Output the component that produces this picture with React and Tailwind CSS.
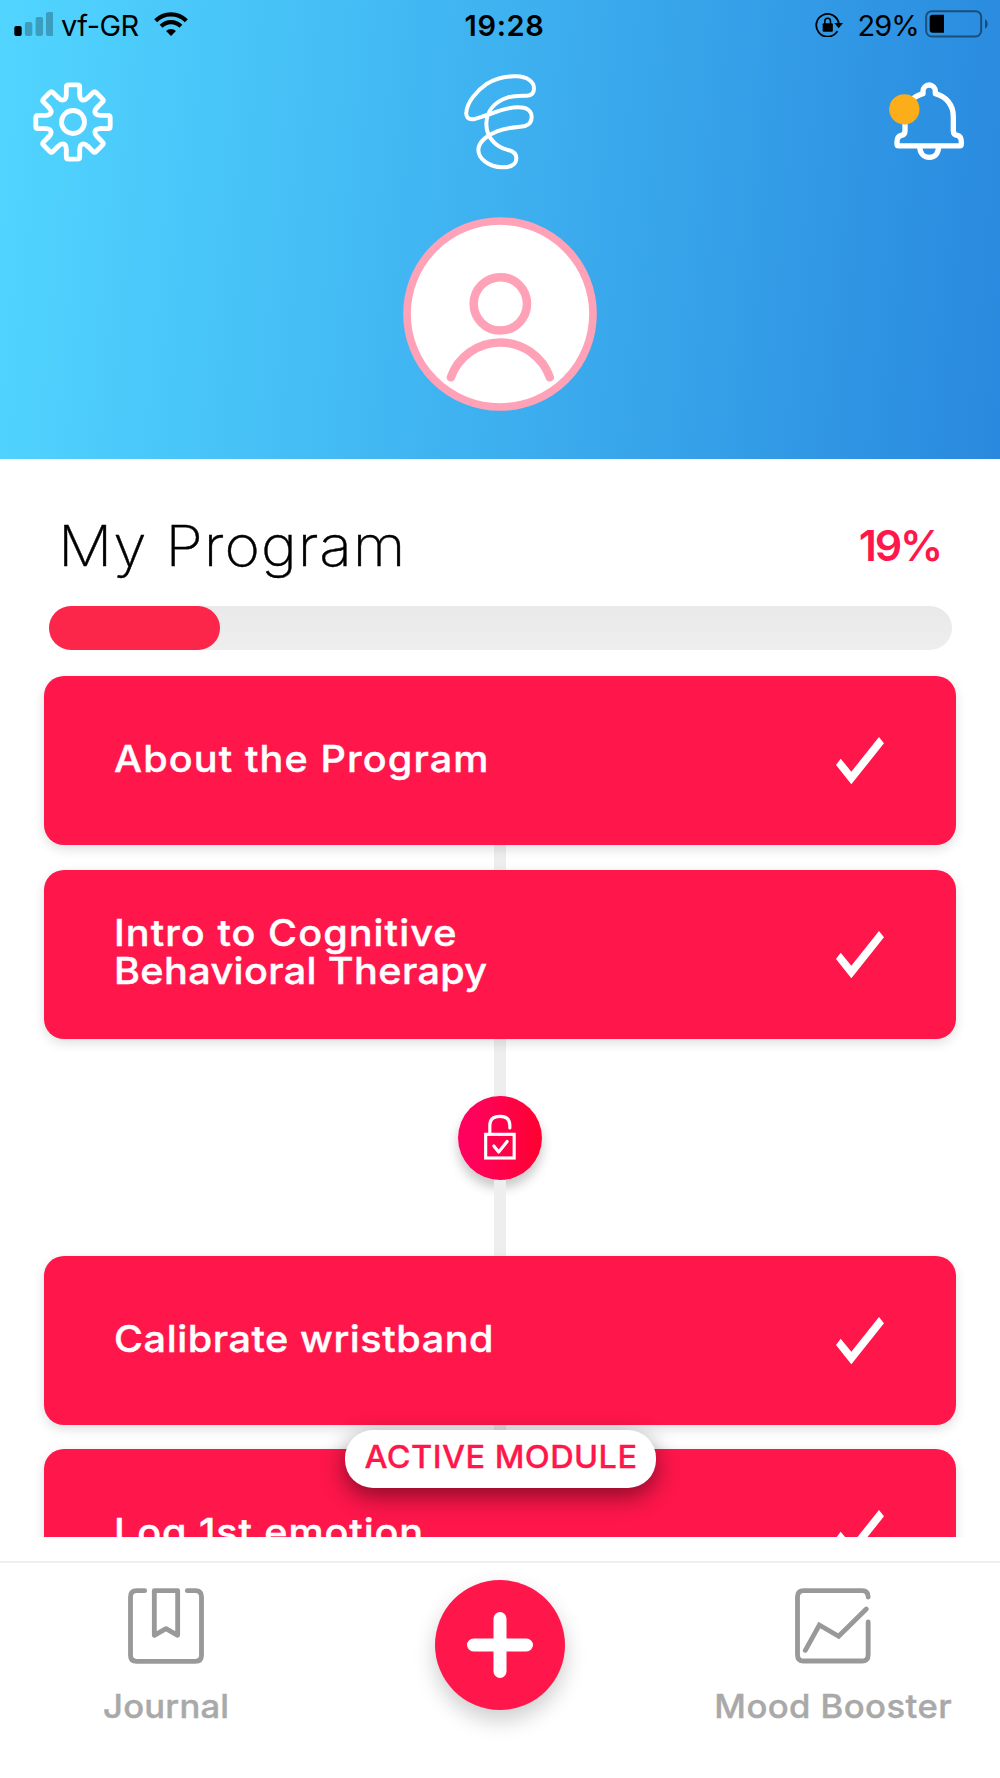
import React from "react";

function SignalBars() {
  return (
    <svg className="h-6 w-[39px]" viewBox="0 0 39 24">
      <rect x="0.3" y="14" width="7.4" height="10" rx="2" fill="#000" />
      <g fill="#000" fillOpacity="0.25">
        <rect x="10.9" y="10" width="7.4" height="14" rx="2" />
        <rect x="21.6" y="5" width="7.4" height="19" rx="2" />
        <rect x="32" y="0" width="7.4" height="24" rx="2" />
      </g>
    </svg>
  );
}

function WifiIcon() {
  return (
    <svg className="h-6 w-[34px]" viewBox="464 36 102 73">
      <g fill="none" stroke="#000" strokeWidth="12.5">
        <path d="M468.3 62.7A65.5 65.5 0 0 1 561.7 62.7" />
        <path d="M485 79.5A42 42 0 0 1 545 79.5" />
      </g>
      <path d="M500 94A21 21 0 0 1 530 94L515 109Z" fill="#000" />
    </svg>
  );
}

function RotationLockIcon() {
  return (
    <svg className="h-[25px] w-[28px]" viewBox="105 35 84 75">
      <path d="M171 94A34 34 0 1 1 176.500 70" fill="none" stroke="#000" strokeWidth="5.5" strokeLinecap="round" />
      <path d="M163 68H189L176 84Z" />
      <rect x="128" y="69" width="30.500" height="25" rx="3" />
      <path d="M134.500 71V62.500a8.500 9 0 0 1 17 0V71" fill="none" stroke="#000" strokeWidth="4.500" />
    </svg>
  );
}

function BatteryIcon() {
  return (
    <svg className="h-[28px] w-[64px]" viewBox="435 31 192 84">
      <rect x="438.500" y="34.500" width="165" height="76" rx="17" fill="none" stroke="#000" strokeOpacity="0.45" strokeWidth="6" />
      <path d="M458 45H492V99H458Q449 99 449 90V54Q449 45 458 45Z" />
      <path d="M615 58Q623.500 63 623.500 72.500T615 87Z" fillOpacity="0.45" />
    </svg>
  );
}

const teeth = [0, 45, 90, 135, 180, 225, 270, 315];

function GearIcon() {
  return (
    <svg className="h-20 w-20" viewBox="-40 -40 80 80" fill="none" stroke="#fff" strokeWidth="4.8" strokeLinecap="round">
      {teeth.map((angle) => (
        <path
          key={angle}
          transform={`rotate(${angle})`}
          d="M-15 -24.500C-10.400 -19.900 -6.700 -21.500 -6.700 -28V-35Q-6.700 -37.200 -4.500 -37.200H4.500Q6.700 -37.200 6.700 -35V-28"
        />
      ))}
      <circle r="11.500" />
    </svg>
  );
}

function ScribbleLogo() {
  return (
    <svg className="h-[100px] w-[75px]" viewBox="190 215 225 300" fill="none" stroke="#fff" strokeWidth="12">
      <path d="M272 341C250 347 236 355 220 357C206 358 198 349 200 335C203 305 230 272 262 250C290 233 322 227 350 228C382 229 403 243 403 264C403 278 396 286 382 286C355 286 345 285 325 291C285 304 260 332 260 372C261 415 292 440 322 448C342 452 350 462 350 474C350 490 340 501 308 501C266 500 236 474 236 448C237 422 268 402 292 393C325 380 355 381 376 377C389 373 396 362 396 350C396 333 384 321 358 321C325 320 298 331 272 341Z" />
    </svg>
  );
}

function BellIcon() {
  return (
    <svg className="h-[83.300px] w-20" viewBox="320 240 240 250">
      <g fill="none" stroke="#fff" strokeWidth="16" strokeLinejoin="round">
        <path d="M355 437.500Q350 437.500 350 432V425Q350 409 363 406Q374 404 374 392V350C374 315 396 289 428 281V273.500a18.500 18.500 0 0 1 37 0V281C497 289 519 315 519 350V392Q519 404 531 406Q543 409 543 425V432Q543 437.500 538 437.500Z" />
        <path d="M418.500 440C418.500 460 430 472 447 472S474.500 460 474.500 440" />
      </g>
      <circle cx="372" cy="328" r="45.500" fill="#fcae1a" />
    </svg>
  );
}

function Avatar() {
  return (
    <svg className="h-[194px] w-[194px]" viewBox="39 51 582 582" fill="none" stroke="#ffa1b7" strokeWidth="25.500">
      <circle cx="330" cy="342" r="279" fill="#fff" strokeWidth="23" />
      <circle cx="331" cy="311.500" r="80" />
      <path d="M182.500 532A157.700 157.700 0 0 1 479.500 532" strokeLinecap="round" />
    </svg>
  );
}

function CheckMark() {
  return (
    <svg className="h-[47.300px] w-12 shrink-0" viewBox="1008 713 144 142">
      <path d="M1008 797L1022 778L1054 817L1137 713L1152 732L1054 855Z" fill="#fff" />
    </svg>
  );
}

function LockBadge() {
  return (
    <div className="h-[84px] w-[84px] rounded-full bg-linear-to-r from-[#ff0062] to-[#ff002e] shadow-[0_8px_12px_rgba(0,0,0,0.22)]">
      <svg className="h-full w-full" viewBox="114 199 252 252" fill="none" stroke="#fff" strokeWidth="9.500" strokeLinecap="round">
        <rect x="197" y="314" width="85.500" height="71" />
        <path d="M209.500 312V287Q209.500 260 239.500 260T269.500 287V295" />
        <path d="M221.500 349L236 367L261.500 335.500" strokeLinejoin="round" />
      </svg>
    </div>
  );
}

function JournalIcon() {
  return (
    <svg className="h-[76px] w-[76px]" viewBox="384 115 228 228" fill="none" stroke="#999" strokeWidth="14.500" strokeLinecap="round" strokeLinejoin="round">
      <path d="M434 123H410Q391.500 123 391.500 142V317Q391.500 335 410 335H586Q604.500 335 604.500 317V142Q604.500 123 586 123H562" />
      <path d="M463 123H533V257L498 237L463 257Z" />
    </svg>
  );
}

function MoodIcon() {
  return (
    <svg className="h-[76px] w-[76px]" viewBox="886 115 228 228" fill="none" stroke="#999" strokeWidth="14.500" strokeLinecap="round">
      <path d="M1105.500 142Q1105.500 123 1087 123H912Q893.500 123 893.500 142V315Q893.500 334 912 334H1087Q1105.500 334 1105.500 315V217" />
      <path d="M917 302L959 226L1017 260L1100 178" />
    </svg>
  );
}

function ModuleCard({ children, badge }) {
  return (
    <div className="relative flex h-[169.200px] w-[912.600px] shrink-0 items-center justify-between rounded-[20px] bg-[#ff164b] pr-[72.300px] pl-[70.500px] shadow-[0_4px_12px_rgba(0,0,0,0.13)]">
      <div className="origin-left scale-x-107 pb-[3.500px] text-[37px] leading-[38.500px] font-medium text-white [-webkit-text-stroke:0.4px_white]">{children}</div>
      <CheckMark />
      {badge && (
        <div className="absolute -top-[19.500px] left-[301.300px] z-10 flex h-[58px] w-[311px] items-center justify-center rounded-[28px] bg-white pb-[3.500px] text-[31px] font-medium tracking-[0.400px] whitespace-nowrap text-[#ff164b] shadow-[0_8px_24px_rgba(0,0,0,0.48)] [-webkit-text-stroke:0.3px_#ff164b]">
          <span className="scale-x-105">{badge}</span>
        </div>
      )}
    </div>
  );
}

function Connector({ className }) {
  return <div className={`w-[12px] shrink-0 bg-[#eee] ${className}`} />;
}

export default function App() {
  return (
    <div className="flex h-[1778px] w-[1000px] flex-col overflow-hidden bg-white font-['Inter','Liberation_Sans',sans-serif]">
      <header className="h-[459px] shrink-0 bg-[linear-gradient(95deg,#51d5ff_0%,#3dafef_52%,#2989de_100%)]">
        <div className="grid h-12 grid-cols-[1fr_auto_1fr] items-center text-[29px] leading-9 text-black">
          <div className="flex items-center pl-[14px]">
            <SignalBars />
            <span className="w-[101.300px] pt-[3px] pl-[8px] tracking-[-0.500px]">vf-GR</span>
            <WifiIcon />
          </div>
          <span className="pt-[3px] pl-[9px] font-semibold tracking-[0.650px]">19:28</span>
          <div className="flex items-center justify-end pr-[11px]">
            <RotationLockIcon />
            <span className="ml-[14.500px] w-[60.500px] pt-[3px] tracking-[-1px]">29%</span>
            <span className="ml-[7px]"><BatteryIcon /></span>
          </div>
        </div>
        <div className="mt-[23.700px] grid h-[100px] grid-cols-3 items-center pr-[33.500px] pl-[33.400px]">
          <GearIcon />
          <div className="flex justify-center pl-[1.500px]"><ScribbleLogo /></div>
          <div className="flex justify-end"><BellIcon /></div>
        </div>
        <div className="mt-[45.300px] flex justify-center">
          <Avatar />
        </div>
      </header>

      <section className="shrink-0 px-[48.500px] pt-[51.600px]">
        <div className="flex h-[70px] items-center justify-between pr-[10.500px] pl-[9.500px]">
          <h1 className="origin-left scale-x-108 text-[56px] font-extralight tracking-[0.900px] text-black [-webkit-text-stroke:0.4px_black]">My Program</h1>
          <span className="text-[43px] font-semibold tracking-[-2.200px] text-[#ff164b]">19%</span>
        </div>
        <div className="mt-[25.400px] h-[43.700px] rounded-[24px] bg-linear-to-b from-[#e9e9e9] to-[#eee]">
          <div className="h-full w-[171px] rounded-[24px] bg-[#fb2649]" />
        </div>
      </section>

      <main className="flex h-[887px] shrink-0 flex-col items-center overflow-hidden pt-[26.600px]">
        <ModuleCard><span className="tracking-[1.040px]">About the Program</span></ModuleCard>
        <Connector className="h-[24.200px]" />
        <ModuleCard>
          <span className="block tracking-[0.980px]">Intro to Cognitive</span>
          <span className="block tracking-[0.350px]">Behavioral Therapy</span>
        </ModuleCard>
        <Connector className="h-[57.600px]" />
        <LockBadge />
        <Connector className="h-[75.500px]" />
        <ModuleCard><span className="tracking-[0.520px]">Calibrate wristband</span></ModuleCard>
        <Connector className="h-[24.200px]" />
        <ModuleCard badge="ACTIVE MODULE"><span className="tracking-[0.830px]">Log 1st emotion</span></ModuleCard>
      </main>

      <nav className="mt-[24px] grid grow grid-cols-3 border-t-[2px] border-[#efefef] text-[33px] leading-10 font-medium text-[#a9a9a9]">
        <div className="flex flex-col items-center pt-[25.500px] pr-[1px]">
          <JournalIcon />
          <span className="mt-[21.700px] scale-x-105 tracking-[0.200px] [-webkit-text-stroke:0.4px_#a9a9a9]">Journal</span>
        </div>
        <div className="flex justify-center pt-[17px]">
          <button className="flex h-[130px] w-[130px] items-center justify-center rounded-full bg-[#ff164b] shadow-[0_10px_22px_rgba(0,0,0,0.2)]" aria-label="Add entry">
            <svg className="h-[66px] w-[66px]" viewBox="0 0 66 66" fill="none" stroke="#fff" strokeWidth="13" strokeLinecap="round">
              <path d="M33 6.500V59.500M6.500 33H59.500" />
            </svg>
          </button>
        </div>
        <div className="flex flex-col items-center pt-[25.500px]">
          <MoodIcon />
          <span className="mt-[21.700px] scale-x-105 tracking-[0.400px] [-webkit-text-stroke:0.4px_#a9a9a9]">Mood Booster</span>
        </div>
      </nav>
    </div>
  );
}
